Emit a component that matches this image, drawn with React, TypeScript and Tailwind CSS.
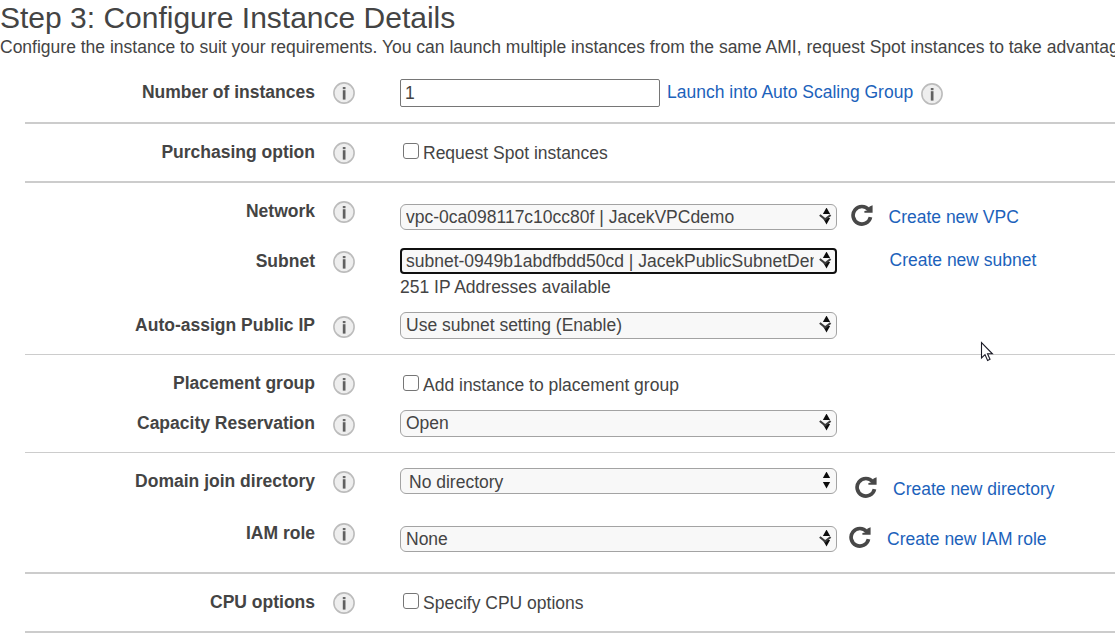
import type { ReactNode } from 'react';

function InfoIcon({ className = '' }: { className?: string }) {
  return (
    <svg className={`h-[22px] w-[22px] shrink-0 ${className}`} viewBox="0 0 22 22">
      <circle cx="11" cy="11" r="10.1" fill="#eeeeee" stroke="#bcbcbc" strokeWidth="1.6" />
      <rect x="9.8" y="5" width="2.7" height="2.2" fill="#666" />
      <rect x="9.8" y="8.2" width="2.7" height="9.4" fill="#606060" />
    </svg>
  );
}

function RefreshIcon({ className = '' }: { className?: string }) {
  return (
    <svg className={`h-[22px] w-[22px] shrink-0 ${className}`} viewBox="0 0 22 22">
      <path d="M17.8 5.8A8.8 8.8 0 1 0 19.5 13.2" fill="none" stroke="#484848" strokeWidth="3.7" />
      <path d="M21.6 1.2V8.8H13.4V7L16.2 6.4L18.6 2.6Z" fill="#484848" />
    </svg>
  );
}

function Arrows({ chevron = true }: { chevron?: boolean }) {
  return (
    <svg className="mt-[2px] h-[18px] w-[14px] shrink-0" viewBox="0 0 14 18">
      <path d="M8.5 -.4L12.1 6H4.9Z" fill="#0c0c0c" />
      <path d="M4.9 10H12.1L8.5 16.4Z" fill="#0c0c0c" />
      {chevron && <path d="M1.8 7L7.2 11.4L12.6 7" fill="none" stroke="#3c3c3c" strokeWidth="2.1" />}
    </svg>
  );
}

function Select({ children, className = '', chevron = true, focused = false }: {
  children: ReactNode;
  className?: string;
  chevron?: boolean;
  focused?: boolean;
}) {
  return (
    <div
      className={`flex w-[437px] shrink-0 items-start justify-between bg-[#f8f8f8] ${
        focused ? 'rounded-[4px] border-2 border-[#101010] pt-px pr-[3px] pl-[4px]' : 'rounded-[6px] border border-[#a3a3a3] pt-[2px] pr-[4px] pl-[5px]'
      } ${className}`}
    >
      <span className="w-[408px] overflow-hidden whitespace-nowrap">{children}</span>
      <span className="-mt-px">
        <Arrows chevron={chevron} />
      </span>
    </div>
  );
}

function Row({ label, height, labelTop, iconTop, children }: {
  label: string;
  height: string;
  labelTop: string;
  iconTop: string;
  children: ReactNode;
}) {
  return (
    <div className={`flex items-start ${height}`}>
      <div className={`w-[290px] shrink-0 text-right font-bold ${labelTop}`}>{label}</div>
      <InfoIcon className={`mr-[45px] ml-[18px] ${iconTop}`} />
      {children}
    </div>
  );
}

function Check({ children, boxTop, textTop }: { children: ReactNode; boxTop: string; textTop: string }) {
  return (
    <label className="flex items-start">
      <input
        type="checkbox"
        className={`mr-[4px] ml-[3px] h-[16px] w-[16px] appearance-none rounded-[3px] border border-[#767676] bg-white ${boxTop}`}
      />
      <span className={textTop}>{children}</span>
    </label>
  );
}

function Link({ children, className }: { children: ReactNode; className: string }) {
  return (
    <a href="#" className={`shrink-0 text-[#1c62bb] ${className}`}>
      {children}
    </a>
  );
}

export default function App() {
  return (
    <div className="relative h-[639px] w-[1115px] overflow-hidden bg-white font-['Liberation_Sans',Arial,sans-serif] text-[17.5px] leading-[20px] whitespace-nowrap text-[#444]">
      <h1 className="h-[37px] text-[30px] leading-[35px] text-[#444]">Step 3: Configure Instance Details</h1>
      <p className="h-[35px]">
        Configure the instance to suit your requirements. You can launch multiple instances from the same AMI, request Spot instances to take advantage
      </p>

      <div className="ml-[25px]">
        <section className="border-b-2 border-[#ccc]">
          <Row label="Number of instances" height="h-[50px]" labelTop="mt-[10px]" iconTop="mt-[10px]">
            <input
              type="text"
              defaultValue="1"
              className="mt-[7px] h-[28px] w-[260px] shrink-0 rounded-[2px] border border-[#767676] bg-white pl-[4px] outline-none"
            />
            <Link className="mt-[10px] ml-[7px]">Launch into Auto Scaling Group</Link>
            <InfoIcon className="mt-[11px] ml-[8px]" />
          </Row>
        </section>

        <section className="border-b-2 border-[#ccc]">
          <Row label="Purchasing option" height="h-[57px]" labelTop="mt-[18px]" iconTop="mt-[18px]">
            <Check boxTop="mt-[19px]" textTop="mt-[19px]">Request Spot instances</Check>
          </Row>
        </section>

        <section className="border-b border-[#ccc]">
          <Row label="Network" height="h-[58px]" labelTop="mt-[18px]" iconTop="mt-[18px]">
            <Select className="mt-[21px] h-[26px]">vpc-0ca098117c10cc80f | JacekVPCdemo</Select>
            <RefreshIcon className="mt-[21px] ml-[14px]" />
            <Link className="mt-[24px] ml-[15.5px]">Create new VPC</Link>
          </Row>
          <Row label="Subnet" height="h-[62px]" labelTop="mt-[10px]" iconTop="mt-[10px]">
            <div className="mt-[7px] flex w-[437px] shrink-0 flex-col gap-[3px]">
              <Select focused className="h-[26px]">subnet-0949b1abdfbdd50cd | JacekPublicSubnetDemo</Select>
              <span>251 IP Addresses available</span>
            </div>
            <Link className="mt-[9px] ml-[52.5px]">Create new subnet</Link>
          </Row>
          <Row label="Auto-assign Public IP" height="h-[51px]" labelTop="mt-[12px]" iconTop="mt-[13px]">
            <Select className="mt-[9px] h-[27px]">Use subnet setting (Enable)</Select>
          </Row>
        </section>

        <section className="border-b border-[#ccc]">
          <Row label="Placement group" height="h-[45px]" labelTop="mt-[18px]" iconTop="mt-[18px]">
            <Check boxTop="mt-[20px]" textTop="mt-[20px]">Add instance to placement group</Check>
          </Row>
          <Row label="Capacity Reservation" height="h-[52px]" labelTop="mt-[13px]" iconTop="mt-[14px]">
            <Select className="mt-[10px] h-[27px]">Open</Select>
          </Row>
        </section>

        <section className="border-b-2 border-[#ccc]">
          <Row label="Domain join directory" height="h-[57px]" labelTop="mt-[18px]" iconTop="mt-[18px]">
            <Select chevron={false} className="mt-[15px] h-[26px]">
              <span className="ml-[3px] inline-block pt-px">No directory</span>
            </Select>
            <RefreshIcon className="mt-[23px] ml-[18px]" />
            <Link className="mt-[26px] ml-[16px]">Create new directory</Link>
          </Row>
          <Row label="IAM role" height="h-[62px]" labelTop="mt-[13px]" iconTop="mt-[13px]">
            <Select className="mt-[16px] h-[26px]">None</Select>
            <RefreshIcon className="mt-[16px] ml-[12px]" />
            <Link className="mt-[19px] ml-[16px]">Create new IAM role</Link>
          </Row>
        </section>

        <section className="border-b-2 border-[#ccc]">
          <Row label="CPU options" height="h-[57px]" labelTop="mt-[18px]" iconTop="mt-[18px]">
            <Check boxTop="mt-[19px]" textTop="mt-[19px]">Specify CPU options</Check>
          </Row>
        </section>
      </div>

      <svg className="absolute top-[341px] left-[980px] h-[21px] w-[14px]" viewBox="0 0 14 21">
        <path d="M1.5 1.5V17L5 13.6L7.6 19.4L10 18.3L7.5 12.8H12.4Z" fill="#fff" stroke="#1a1a26" strokeWidth="1.1" />
      </svg>
    </div>
  );
}
